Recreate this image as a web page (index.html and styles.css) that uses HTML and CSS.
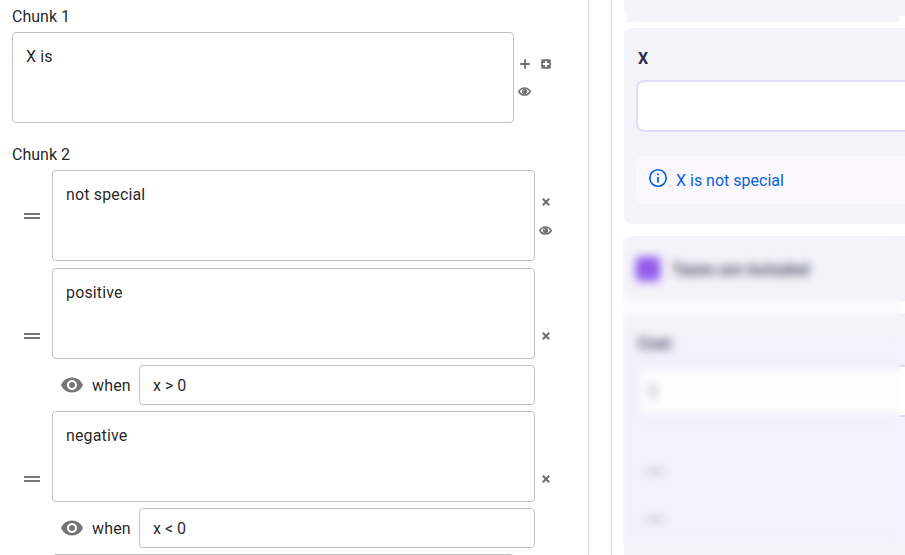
FILE: index.html
```html
<!DOCTYPE html>
<html lang="en">
<head>
<meta charset="utf-8">
<title>Chunk editor</title>
<link rel="stylesheet" href="styles.css">
</head>
<body>
<svg class="defs" aria-hidden="true">
  <symbol id="eye" viewBox="0 0 24 24"><path d="M12 4.5C7 4.5 2.73 7.61 1 12c1.73 4.39 6 7.5 11 7.5s9.27-3.11 11-7.5c-1.73-4.39-6-7.5-11-7.5zM12 17c-2.76 0-5-2.24-5-5s2.240-5 5-5 5 2.240 5 5-2.240 5-5 5zm0-8c-1.660 0-3 1.340-3 3s1.340 3 3 3 3-1.340 3-3-1.340-3-3-3z"/></symbol>
  <symbol id="eye-small" viewBox="0 0 12 8"><path fill="none" stroke="currentColor" stroke-width="1.4" d="M.7 4C3.200-.3 8.800-.3 11.300 4 8.800 8.300 3.200 8.300.7 4z"/><circle cx="6" cy="3.900" r="2.400"/><path fill="none" stroke="#fff" stroke-width=".6" d="M4.800 3.900Q4.900 2.800 6 2.700"/></symbol>
  <symbol id="cross" viewBox="0 0 8 8"><path fill="none" stroke="currentColor" stroke-width="2.1" d="M.8 .8l6.400 6.400M7.200.8L.8 7.200"/></symbol>
</svg>
<div class="app">
  <main class="editor">
    <h2 class="label">Chunk 1</h2>
    <div class="chunk">
      <div class="box">X is</div>
      <div class="tools">
        <svg class="plus" viewBox="0 0 10 10"><path d="M4.100 .2h1.800V4.100h3.900v1.800H5.900v3.900H4.100V5.900H.2V4.100h3.900z"/></svg>
        <svg class="plus" viewBox="0 0 10 10"><path fill-rule="evenodd" d="M1.200.2h7.600q1 0 1 1v7.600q0 1-1 1H1.200q-1 0-1-1V1.200q0-1 1-1zM4.100 2v2.100H2v1.800h2.100V8h1.800V5.900H8V4.100H5.900V2z"/></svg>
        <svg class="eye-small"><use href="#eye-small"/></svg>
      </div>
    </div>
    <h2 class="label second">Chunk 2</h2>
    <div class="variants">
      <div class="variant first">
        <span class="handle"></span>
        <div class="fields"><div class="box">not special</div></div>
        <div class="side"><svg class="cross"><use href="#cross"/></svg><svg class="eye-small"><use href="#eye-small"/></svg></div>
      </div>
      <div class="variant">
        <span class="handle"></span>
        <div class="fields">
          <div class="box">positive</div>
          <div class="when"><svg class="eye"><use href="#eye"/></svg><span class="word">when</span><div class="condition">x &gt; 0</div></div>
        </div>
        <div class="side"><svg class="cross"><use href="#cross"/></svg></div>
      </div>
      <div class="variant">
        <span class="handle"></span>
        <div class="fields">
          <div class="box">negative</div>
          <div class="when"><svg class="eye"><use href="#eye"/></svg><span class="word">when</span><div class="condition">x &lt; 0</div></div>
        </div>
        <div class="side"><svg class="cross"><use href="#cross"/></svg></div>
      </div>
      <div class="next"></div>
    </div>
  </main>
  <aside class="preview">
    <div class="card previous"><span class="strip"></span></div>
    <section class="card result">
      <h3>X</h3>
      <div class="input"></div>
      <div class="info">
        <svg viewBox="0 0 18 18"><circle cx="9" cy="9" r="7.400" fill="none" stroke="currentColor" stroke-width="1.500"/><path d="M8.200 8h1.600v5H8.200zM8.200 5h1.600v1.600H8.200z"/></svg>
        <span>X is not special</span>
      </div>
    </section>
    <div class="locked">
      <section class="card taxes">
        <span class="check"><svg viewBox="0 0 24 24"><path d="M6 12l4 4 8-8"/></svg></span>
        <b>Taxes are included</b>
      </section>
      <section class="card cost">
        <h3>Cost</h3>
        <div class="input">$</div>
        <div class="values"><span></span><span></span></div>
      </section>
      <div class="veil"></div>
    </div>
  </aside>
</div>
</body>
</html>
```
FILE: styles.css
```css
* { box-sizing: border-box; }
body { margin: 0; overflow: hidden; background: #fff; color: rgba(0, 0, 0, .87); font: 16px/24px Roboto, sans-serif; }
h2, h3 { margin: 0; font-size: 16px; line-height: 24px; }
svg { display: block; fill: currentColor; }
.defs { display: none; }
.app { display: flex; gap: 22px; height: 555px; overflow: hidden; }
.editor { width: 589px; flex: none; padding: 4px 0 0 12px; border-right: 1px solid #e0e0e0; box-shadow: 1px 0 2px rgba(0, 0, 0, .06); }
.label { height: 28px; line-height: 26px; font-weight: 400; }
.second { margin-top: 19px; }
.chunk { display: flex; gap: 5px; }
.chunk .box { width: 502px; }
.box { height: 91px; padding: 12px 13px; border: 1px solid #c0c0c0; border-radius: 4px; letter-spacing: .15px; }
.tools { display: grid; grid-template-columns: 11px 11px; gap: 18px 10px; align-content: start; padding-top: 27px; color: #707070; }
.plus { width: 10px; height: 10px; justify-self: center; }
.tools .eye-small { margin-left: -1px; }
.eye-small { width: 13px; height: 9px; }
.cross { width: 8px; height: 8px; }
.variant { display: grid; grid-template-columns: 40px 483px 21px; margin-bottom: 6px; }
.variant.first { margin-bottom: 7px; }
.handle { width: 16px; height: 6px; margin: 65px 0 0 12px; border: solid #757575; border-width: 2px 0; }
.first .handle { margin-top: 43px; }
.when { display: grid; grid-template-columns: 24px 39px 396px; align-items: center; gap: 8px; height: 40px; margin-top: 6px; padding-left: 8px; }
.word { padding-top: 1px; letter-spacing: .15px; }
.eye { width: 24px; height: 24px; color: #757575; }
.condition { height: 40px; padding: 8px 13px 6px; border: 1px solid #c0c0c0; border-radius: 4px; }
.side { display: grid; justify-items: center; align-content: start; gap: 20px; padding-top: 64px; color: #707070; }
.first .side { padding-top: 28px; }
.next { height: 40px; width: 462px; margin-left: 40px; border: 1px solid #c0c0c0; border-radius: 4px; }
.preview { flex: 1; min-width: 0; padding-left: 12px; border-left: 1px solid #e4e4e4; box-shadow: -1px 0 2px rgba(0, 0, 0, .06); color: #2b2a48; }
.card { width: 300px; background: #f4f3fa; border-radius: 8px; margin-bottom: 12px; }
.card h3 { padding-left: 2px; }
.previous { position: relative; height: 16px; border-radius: 0 0 8px 8px; }
.strip { position: absolute; left: 3px; top: 10px; width: 272px; height: 12px; background: #f4f3fa; }
.result { height: 196px; padding: 19px 12px 20px; }
.input { height: 52px; margin-top: 9px; padding: 13px 10px; border: 2px solid #e4dafa; border-radius: 8px; background: #fff; }
.cost .input { color: #8a8a98; }
.info { display: flex; gap: 8px; height: 48px; margin-top: 24px; padding: 12px; background: #faf7fe; border-radius: 8px; color: #0a62d8; }
.info svg { width: 20px; height: 20px; }
.info span { padding-top: 1px; }
.locked { position: relative; }
.taxes { display: flex; gap: 12px; height: 65px; padding: 21px 12px; }
.taxes b { padding-top: 1px; letter-spacing: .15px; }
.check { width: 24px; height: 24px; border-radius: 4px; background: #7c35ea; }
.check path { fill: none; stroke: #fff; stroke-width: 1; }
.cost { height: 290px; padding: 19px 12px; background: linear-gradient(#f4f3fa 20px, #f3f1fd 30px, #f3f1fd 225px, #f4f3fa 235px); }
.values { display: grid; gap: 46px; padding: 53px 11px; }
.values span { width: 16px; height: 2px; background: #77758d; }
.veil { position: absolute; left: -1px; top: 1px; width: 277px; height: 308px; backdrop-filter: blur(5px); background: rgba(240, 240, 240, .1); background: linear-gradient(rgba(242, 241, 248, .15), rgba(242, 241, 248, .15)); }
```
